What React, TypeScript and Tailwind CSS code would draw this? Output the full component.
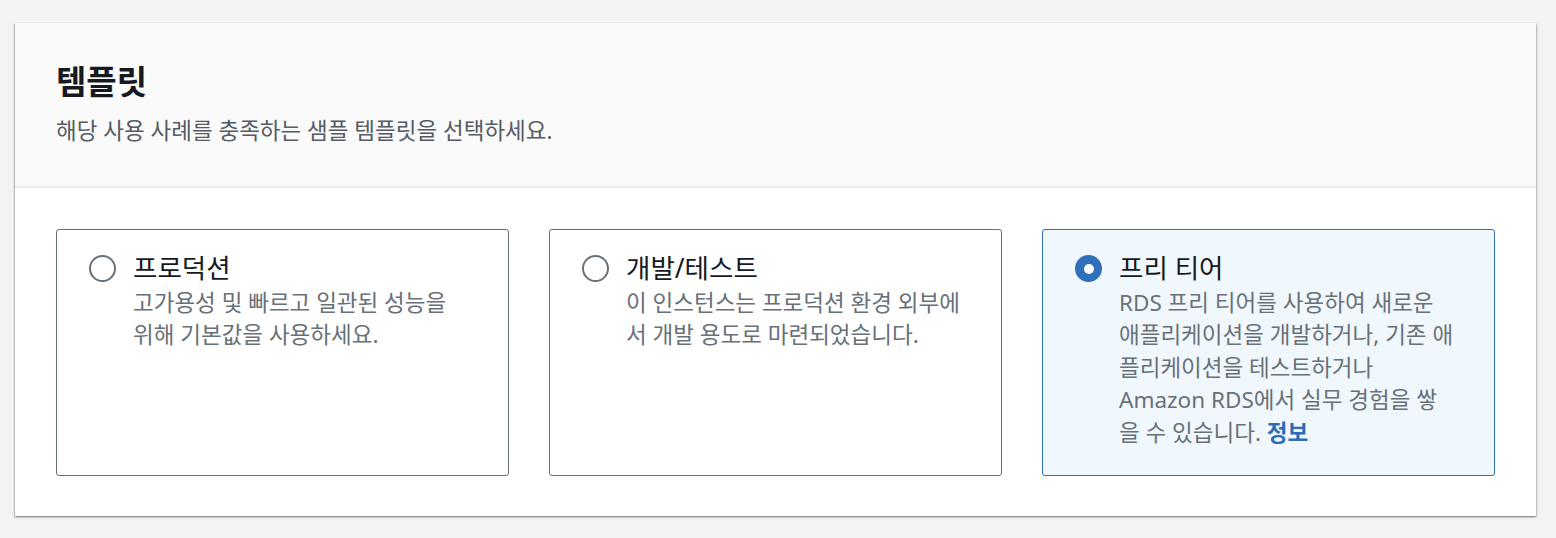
import React from "react";

const font = { fontFamily: '"Noto Sans", "Noto Sans CJK KR", sans-serif' };

function Radio({ checked }: { checked: boolean }) {
  return checked ? (
    <span className="mt-[3px] flex h-[27px] w-[27px] shrink-0 items-center justify-center rounded-full bg-[#2f70b8]">
      <span className="h-[10px] w-[10px] rounded-full bg-white" />
    </span>
  ) : (
    <span className="mt-[3px] h-[27px] w-[27px] shrink-0 rounded-full border-2 border-[#687078] bg-white" />
  );
}

function Tile({
  title,
  children,
  checked,
}: {
  title: string;
  children: React.ReactNode;
  checked?: boolean;
}) {
  return (
    <div
      className={
        "flex gap-[17px] rounded-[3px] border-[1.5px] pl-[32px] pr-[35px] pt-[22px] pb-[26px] " +
        (checked ? "border-[#2f70b8] bg-[#f1f8fd]" : "border-[#687078] bg-white")
      }
    >
      <Radio checked={!!checked} />
      <div className="flex w-[338px] flex-col">
        <div className="text-[26.5px] leading-[32px] text-[#16191f]">{title}</div>
        <div className="mt-[3px] text-[22.5px] leading-[32.4px] text-[#687078]">{children}</div>
      </div>
    </div>
  );
}

export default function App() {
  return (
    <div className="min-h-[538px] w-full bg-[#f2f3f3] pt-[23px] pl-[15px] pr-[20px] pb-[22px]" style={font}>
      <div className="w-[1521px] bg-white shadow-[0_1px_2px_0_rgba(0,28,36,0.35),1px_1px_2px_0_rgba(0,28,36,0.15),-1px_1px_1px_0_rgba(0,28,36,0.15)]">
        <div className="border-b-2 border-[#eaeded] bg-[#fafafa] px-[41px] pt-[39px] pb-[39px]">
          <h2 className="text-[33px] font-bold leading-[40px] text-[#16191f]">템플릿</h2>
          <p className="mt-[13px] text-[22.5px] leading-[32px] text-[#545b64]">
            해당 사용 사례를 충족하는 샘플 템플릿을 선택하세요.
          </p>
        </div>
        <div className="grid grid-cols-3 gap-[40px] px-[41px] pt-[41px] pb-[40px]">
          <Tile title="프로덕션">고가용성 및 빠르고 일관된 성능을 위해 기본값을 사용하세요.</Tile>
          <Tile title="개발/테스트">이 인스턴스는 프로덕션 환경 외부에서 개발 용도로 마련되었습니다.</Tile>
          <Tile title="프리 티어" checked>
            RDS 프리 티어를 사용하여 새로운 애플리케이션을 개발하거나, 기존 애플리케이션을 테스트하거나
            Amazon RDS에서 실무 경험을 쌓을 수 있습니다.{" "}
            <a className="font-bold text-[#2a6cb5]">정보</a>
          </Tile>
        </div>
      </div>
    </div>
  );
}
